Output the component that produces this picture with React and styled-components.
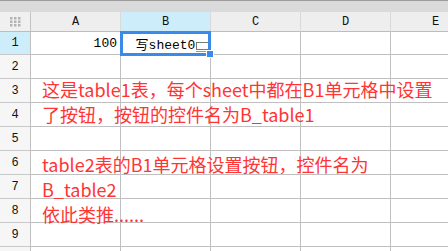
import React from "react";
import styled, { createGlobalStyle } from "styled-components";

const GlobalStyle = createGlobalStyle`
  html, body {
    margin: 0;
    padding: 0;
    background: #ffffff;
    overflow: hidden;
  }
`;

const columns = ["A", "B", "C", "D", "E"];
// the tenth row only peeks in at the bottom edge, its label stays below the fold
const rows = [1, 2, 3, 4, 5, 6, 7, 8, 9, 10];

const cellValues = {
  "A1": { text: "100", align: "right" },
  "B1": { text: "写sheet0", align: "center" }
};

const noteLines = [
  "这是table1表，每个sheet中都在B1单元格中设置",
  "了按钮，按钮的控件名为B_table1",
  "",
  "table2表的B1单元格设置按钮，控件名为",
  "B_table2",
  "依此类推......"
];

export default function App() {
  return (
    <Page>
      <GlobalStyle />
      <TopStrip />
      <Grid>
        <HeaderCell $corner>
          <CornerIcon />
        </HeaderCell>
        {columns.map(col => (
          <HeaderCell key={col} $selected={col === "B"}>
            {col}
          </HeaderCell>
        ))}
        {rows.map(row => (
          <React.Fragment key={row}>
            <RowHeader $selected={row === 1}>{row < 10 ? row : null}</RowHeader>
            {columns.map(col => {
              const value = cellValues[col + row];
              return (
                <Cell key={col + row} $align={value ? value.align : "left"}>
                  {value ? value.text : null}
                </Cell>
              );
            })}
          </React.Fragment>
        ))}
      </Grid>

      <ButtonWidget width="14" height="11" viewBox="0 0 14 11">
        <rect x="0.5" y="0.5" width="13" height="7" fill="none" stroke="#7a7a7a" />
        <line x1="0" y1="9.5" x2="14" y2="9.5" stroke="#9a9a9a" />
      </ButtonWidget>
      <Selection />
      <FillHandle />

      <NoteBox>
        {noteLines.map((line, i) => (
          <NoteLine key={i}>{line || "\u00a0"}</NoteLine>
        ))}
      </NoteBox>
    </Page>
  );
}

function CornerIcon() {
  const dots = [];
  for (let r = 0; r < 3; r++) {
    for (let c = 0; c < 3; c++) {
      dots.push(<rect key={r + "-" + c} x={c * 4} y={r * 3.5} width="2.5" height="2.5" fill="#b3b3b3" />);
    }
  }
  return (
    <svg width="11" height="10" viewBox="0 0 11 10">
      {dots}
    </svg>
  );
}

const Page = styled.div`
  position: relative;
  width: 448px;
  height: 251px;
  overflow: hidden;
  background: #ffffff;
  font-family: "Liberation Mono", "Noto Sans CJK SC", monospace;
`;

const TopStrip = styled.div`
  height: 12px;
  box-sizing: border-box;
  background: #dadada;
  border-top: 1px solid #9c9c9c;
`;

const Grid = styled.div`
  display: grid;
  grid-template-columns: 31px repeat(5, 90px);
  grid-template-rows: 20px 23px repeat(9, 24px);
  width: 481px;
`;

const HeaderCell = styled.div`
  box-sizing: border-box;
  display: flex;
  align-items: center;
  justify-content: center;
  background: ${p => (p.$selected ? "#cdedfa" : p.$corner ? "#f0f0f0" : "#eeeeee")};
  border-right: 1px solid ${p => (p.$corner ? "#c4c4c4" : "#d9d9d9")};
  border-bottom: 1px solid #bdbdbd;
  font-size: 12px;
  color: #111111;
  padding-top: 1px;
`;

const RowHeader = styled.div`
  box-sizing: border-box;
  display: flex;
  align-items: center;
  justify-content: center;
  background: ${p => (p.$selected ? "#cdedfa" : "#f6f6f6")};
  border-right: 1px solid #c0c0c0;
  border-bottom: 1px solid #c8c8c8;
  font-size: 12px;
  color: #111111;
`;

const Cell = styled.div`
  box-sizing: border-box;
  display: flex;
  align-items: center;
  justify-content: ${p =>
    p.$align === "right" ? "flex-end" : p.$align === "center" ? "center" : "flex-start"};
  padding: 0 3px;
  border-right: 1px solid #c0c0c0;
  border-bottom: 1px solid #c0c0c0;
  font-size: 13px;
  color: #000000;
  white-space: nowrap;
`;

const Selection = styled.div`
  position: absolute;
  left: 120px;
  top: 31px;
  width: 91px;
  height: 25px;
  box-sizing: border-box;
  border: 3px solid #3b8ae8;
  pointer-events: none;
`;

const FillHandle = styled.div`
  position: absolute;
  left: 207px;
  top: 51px;
  width: 6px;
  height: 6px;
  background: #3b8ae8;
  border: 1px solid #ffffff;
  box-sizing: content-box;
  margin: -1px 0 0 -1px;
`;

const ButtonWidget = styled.svg`
  position: absolute;
  left: 196px;
  top: 42px;
`;

const NoteBox = styled.div`
  position: absolute;
  left: 42px;
  top: 77px;
  font-family: "Noto Sans CJK SC", "Noto Sans", sans-serif;
  font-size: 18px;
  line-height: 25px;
  color: #ff3434;
  pointer-events: none;
`;

const NoteLine = styled.div`
  white-space: nowrap;
`;
